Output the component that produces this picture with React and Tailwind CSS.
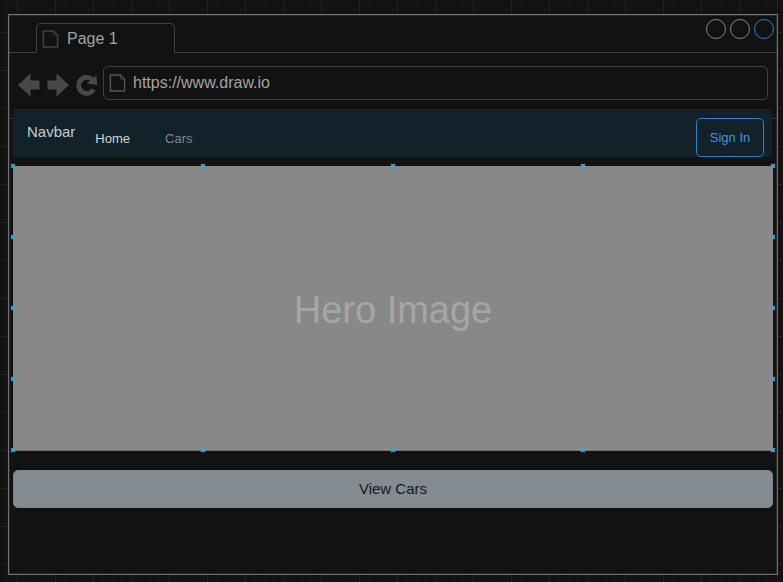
import React from "react";

const STOPS = [0, 25, 50, 75, 100];

const HANDLES = STOPS.flatMap((x) =>
  STOPS.filter((y) => x === 0 || x === 100 || y === 0 || y === 100).map((y) => ({ x, y }))
);

function CanvasGrid() {
  return (
    <svg className="absolute inset-0 h-full w-full" aria-hidden="true">
      <defs>
        <pattern id="grid" x="17" y="32" width="38" height="38" patternUnits="userSpaceOnUse">
          <path d="M9.5 0V38M19.5 0V38M28.5 0V38M0 9.5H38M0 19.5H38M0 28.5H38" stroke="#171717" />
          <path d="M.5 0V38M0 .5H38" stroke="#212121" />
        </pattern>
      </defs>
      <rect width="100%" height="100%" fill="url(#grid)" />
    </svg>
  );
}

function PageIcon({ className }) {
  return (
    <svg viewBox="0 0 18 20" className={className} fill="none" stroke="currentColor" aria-hidden="true">
      <path d="M1.500 1.500H12L16.500 6V18.500H1.500Z" strokeWidth="1.500" />
      <path d="M12 1.500V6H16.500" strokeWidth="0.700" />
    </svg>
  );
}

function ArrowIcon({ className }) {
  return (
    <svg viewBox="0 0 22 24" className={className} fill="currentColor" aria-hidden="true">
      <path d="M0 12 12.500 .5V7.500H21.500V16.500H12.500V23.500Z" />
    </svg>
  );
}

function ReloadIcon() {
  return (
    <svg viewBox="0 0 22 24" className="h-6 w-[22px]" aria-hidden="true">
      <path d="M17.600 16.600A8 8 0 1 1 16 6.400" fill="none" stroke="currentColor" strokeWidth="4.800" />
      <path d="M20.300 2.500 21.300 12 10.500 10.500Z" fill="currentColor" />
    </svg>
  );
}

export default function App() {
  return (
    <div className="relative min-h-screen bg-[#121212] pt-[14px] pr-[5px] pb-[7px] pl-2 font-['Liberation_Sans',Arial,sans-serif]">
      <CanvasGrid />
      <main className="relative border border-[#707070] bg-[#121212] pb-[66px] shadow-[inset_0_0_0_1px_#292929]">
        <header className="flex h-[38px]">
          <div className="w-[27px] border-b border-[#404040]" />
          <div className="mt-2 flex w-[139px] items-center gap-2 rounded-t-[5px] border-x border-t border-[#404040] pl-[5px] text-[16px] leading-7 text-[#a3a3a3]">
            <PageIcon className="h-5 w-[17px] text-[#444444]" />
            Page 1
          </div>
          <div className="flex flex-1 justify-end gap-1 border-b border-[#404040] pt-1 pr-[3px]">
            <button aria-label="Minimize" className="size-5 rounded-full border border-[#858585]" />
            <button aria-label="Maximize" className="size-5 rounded-full border border-[#858585]" />
            <button aria-label="Close" className="size-5 rounded-full border border-[#2f7fc4]" />
          </div>
        </header>

        <div className="flex items-center pt-[13px] pr-[9px] pb-[9px] pl-[9px] text-[#484848]">
          <button aria-label="Back" className="mr-[7px] pt-[3px]">
            <ArrowIcon className="h-6 w-[22px]" />
          </button>
          <button aria-label="Forward" className="mr-[7px] pt-[3px]">
            <ArrowIcon className="h-6 w-[22px] rotate-180" />
          </button>
          <button aria-label="Reload" className="mr-[5px] pt-[3px]">
            <ReloadIcon />
          </button>
          <div className="flex h-[34px] min-w-0 flex-1 items-center gap-[7px] rounded-[5px] border border-[#404040] pl-[5px]">
            <PageIcon className="h-5 w-[17px] shrink-0 text-[#555555]" />
            <input
              aria-label="Address"
              defaultValue="https://www.draw.io"
              className="h-6 min-w-0 flex-1 bg-transparent text-[16px] text-[#a3a3a3] outline-none"
            />
          </div>
        </div>

        <div className="flex">
          <div className="mt-[9px] w-1 border-t border-[#3a3a3a]" />
          <nav className="flex h-12 flex-1 items-start bg-[#13212a] pr-2 pl-[14px] text-[13px] leading-5">
            <span className="mt-[13px] text-[15px] text-[#c5cbd0]">Navbar</span>
            <a href="#home" className="mt-5 ml-5 text-[#d0d6da]">
              Home
            </a>
            <a href="#cars" className="mt-5 ml-[35px] text-[#7f888e]">
              Cars
            </a>
            <button className="mt-[9px] ml-auto h-[39px] w-[68px] rounded-[5px] border border-[#2f7fc4] text-[#3d94e6]">
              Sign In
            </button>
          </nav>
          <div className="mt-[9px] w-[5px] border-t border-[#3a3a3a]" />
        </div>

        <section className="relative mt-[9px] mr-1 ml-1 flex h-[285px] items-center justify-center border-b border-[#777777] bg-[#888888] pt-1 text-[38px] text-[#a6a6a6]">
          Hero Image
          {HANDLES.map(({ x, y }) => (
            <svg
              key={`${x}-${y}`}
              viewBox="0 0 5 5"
              className="absolute size-[5px] -translate-x-1/2 -translate-y-1/2"
              style={{ left: `${x}%`, top: `${y}%` }}
              aria-hidden="true"
            >
              <path d="M.5 .5 4.500 4.500M4.500 .5 .5 4.500" stroke="#4aa0cc" strokeWidth="1.800" />
            </svg>
          ))}
        </section>

        <div className="mt-[19px] mr-1 ml-1 flex">
          <button className="h-[38px] flex-1 rounded-[5px] border border-[#7b8387] bg-[#848b91] text-[15px] text-[#15191c]">
            View Cars
          </button>
        </div>
      </main>
    </div>
  );
}
